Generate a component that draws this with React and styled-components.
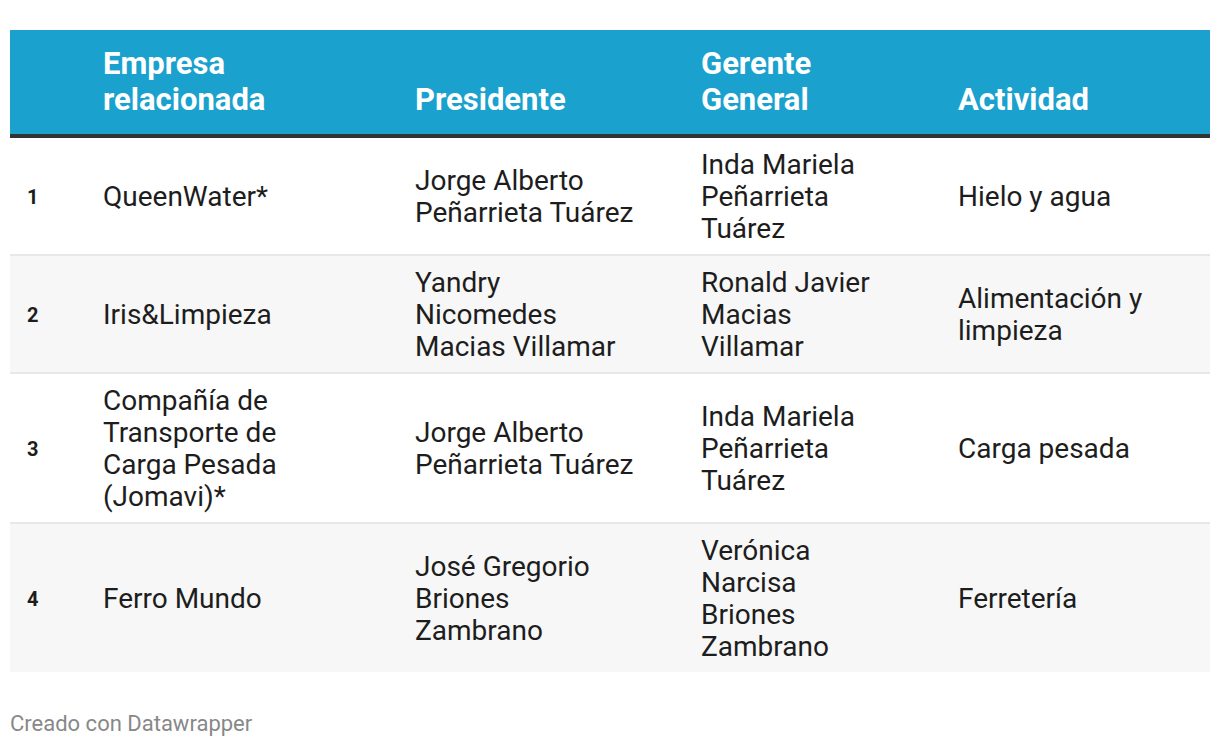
import styled, { createGlobalStyle } from "styled-components";

const GlobalStyle = createGlobalStyle`
  body {
    margin: 0;
    background: #fff;
    font-family: Roboto, "Liberation Sans", sans-serif;
    color: #1d1d1d;
  }
  * { box-sizing: border-box; }
`;

const Page = styled.div`
  padding: 30px 10px 0;
  width: 1220px;
`;

const Table = styled.table`
  width: 1200px;
  border-collapse: collapse;
  table-layout: fixed;
`;

const HeadRow = styled.tr`
  background: #1aa1cd;
  border-bottom: 4px solid #333;
`;

const Th = styled.th`
  width: ${(p) => p.$w}px;
  padding: 16px 10px 16px ${(p) => p.$pl || 10}px;
  text-align: left;
  vertical-align: bottom;
  color: #fff;
  font-size: 31px;
  font-weight: 700;
  line-height: 36px;
  white-space: nowrap;
`;

const Row = styled.tr`
  background: ${(p) => (p.$alt ? "#f7f7f7" : "#fff")};
  border-bottom: 2px solid #e8e8e8;

  &:last-child {
    border-bottom: none;
  }
`;

const Td = styled.td`
  padding: 11px 10px 9px ${(p) => p.$pl || 10}px;
  vertical-align: middle;
  font-size: 28px;
  line-height: 32px;
  white-space: nowrap;
`;

const Num = styled(Td)`
  font-size: 20px;
  font-weight: 700;
`;

const Footer = styled.div`
  margin-top: 39px;
  font-size: 22px;
  line-height: 26px;
  color: #888;
`;

const Lines = ({ text }) =>
  text.split("\n").map((line, i) => (
    <span key={i}>
      {i > 0 && <br />}
      {line}
    </span>
  ));

const columns = [
  { label: "", w: 83, pl: 17 },
  { label: "Empresa\nrelacionada", w: 312 },
  { label: "Presidente", w: 286 },
  { label: "Gerente\nGeneral", w: 257 },
  { label: "Actividad", w: 262 },
];

const rows = [
  ["QueenWater*", "Jorge Alberto\nPeñarrieta Tuárez", "Inda Mariela\nPeñarrieta\nTuárez", "Hielo y agua"],
  ["Iris&Limpieza", "Yandry\nNicomedes\nMacias Villamar", "Ronald Javier\nMacias\nVillamar", "Alimentación y\nlimpieza"],
  ["Compañía de\nTransporte de\nCarga Pesada\n(Jomavi)*", "Jorge Alberto\nPeñarrieta Tuárez", "Inda Mariela\nPeñarrieta\nTuárez", "Carga pesada"],
  ["Ferro Mundo", "José Gregorio\nBriones\nZambrano", "Verónica\nNarcisa\nBriones\nZambrano", "Ferretería"],
];

export default function App() {
  return (
    <>
      <GlobalStyle />
      <Page>
        <Table>
          <thead>
            <HeadRow>
              {columns.map((c, i) => (
                <Th key={i} $w={c.w} $pl={c.pl}>
                  <Lines text={c.label} />
                </Th>
              ))}
            </HeadRow>
          </thead>
          <tbody>
            {rows.map((r, i) => (
              <Row key={i} $alt={i % 2 === 1}>
                <Num $pl={17}>{i + 1}</Num>
                {r.map((cell, j) => (
                  <Td key={j}>
                    <Lines text={cell} />
                  </Td>
                ))}
              </Row>
            ))}
          </tbody>
        </Table>
        <Footer>Creado con Datawrapper</Footer>
      </Page>
    </>
  );
}
